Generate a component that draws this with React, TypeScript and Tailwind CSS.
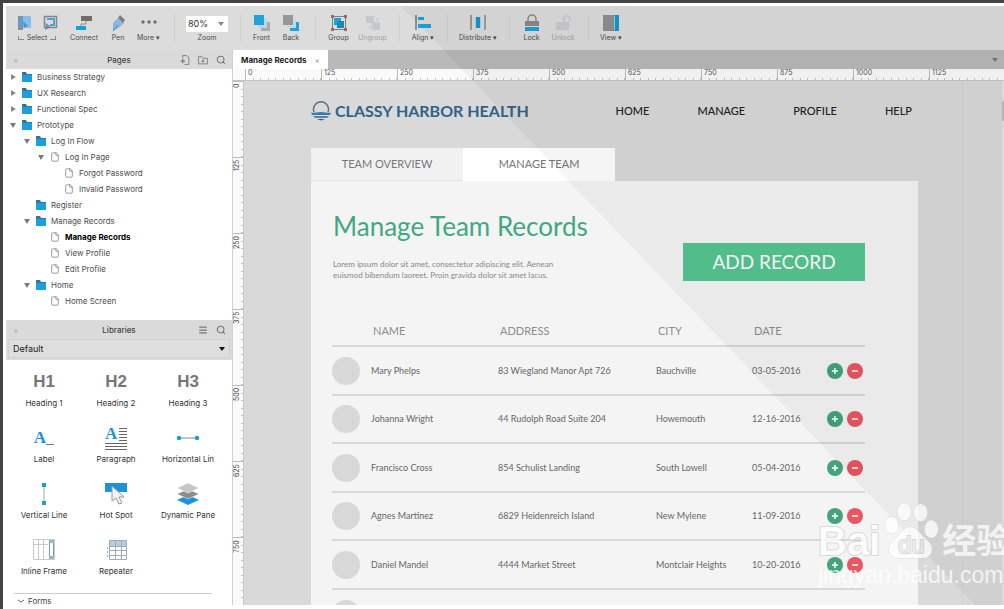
import React, { useState } from "react";
import { File, Menu, Search } from "lucide-react";

interface TreeItem {
	name: string;
	depth: number;
	type: "folder" | "page";
	arrow?: "open" | "closed";
}

interface TeamRecord {
	name: string;
	address: string;
	city: string;
	date: string;
}

const treeItems: TreeItem[] = [
	{ name: "Business Strategy", depth: 0, type: "folder", arrow: "closed" },
	{ name: "UX Research", depth: 0, type: "folder", arrow: "closed" },
	{ name: "Functional Spec", depth: 0, type: "folder", arrow: "closed" },
	{ name: "Prototype", depth: 0, type: "folder", arrow: "open" },
	{ name: "Log In Flow", depth: 1, type: "folder", arrow: "open" },
	{ name: "Log In Page", depth: 2, type: "page", arrow: "open" },
	{ name: "Forgot Password", depth: 3, type: "page" },
	{ name: "Invalid Password", depth: 3, type: "page" },
	{ name: "Register", depth: 1, type: "folder" },
	{ name: "Manage Records", depth: 1, type: "folder", arrow: "open" },
	{ name: "Manage Records", depth: 2, type: "page" },
	{ name: "View Profile", depth: 2, type: "page" },
	{ name: "Edit Profile", depth: 2, type: "page" },
	{ name: "Home", depth: 1, type: "folder", arrow: "open" },
	{ name: "Home Screen", depth: 2, type: "page" },
];

const records: TeamRecord[] = [
	{ name: "Mary Phelps", address: "83 Wiegland Manor Apt 726", city: "Bauchville", date: "03-05-2016" },
	{ name: "Johanna Wright", address: "44 Rudolph Road Suite 204", city: "Howemouth", date: "12-16-2016" },
	{ name: "Francisco Cross", address: "854 Schulist Landing", city: "South Lowell", date: "05-04-2016" },
	{ name: "Agnes Martinez", address: "6829 Heidenreich Island", city: "New Mylene", date: "11-09-2016" },
	{ name: "Daniel Mandel", address: "4444 Market Street", city: "Montclair Heights", date: "10-20-2016" },
];

const indents = ["pl-1", "pl-[18px]", "pl-8", "pl-[46px]"];

const Icon: React.FC<{ children: React.ReactNode; className?: string }> = ({
	children,
	className = "size-[18px]",
}) => (
	<svg viewBox="0 0 18 18" className={className} fill="none" aria-hidden="true">
		{children}
	</svg>
);

const Tool: React.FC<{
	label: string;
	width: string;
	disabled?: boolean;
	children: React.ReactNode;
}> = ({ label, width, disabled, children }) => (
	<button
		disabled={disabled}
		className={`${width} flex shrink-0 flex-col items-center gap-0.5 whitespace-nowrap text-[7px] leading-2 ${
			disabled ? "text-[#a2a2a2]" : "text-[#4a4a4a]"
		}`}>
		<Icon>{children}</Icon>
		{label}
	</button>
);

const Divider: React.FC = () => (
	<div className="flex w-4 shrink-0 justify-center self-stretch pb-2">
		<div className="w-px bg-[#d0d0d0]" />
	</div>
);

const Toolbar: React.FC = () => {
	const [zoom, setZoom] = useState<string>("80%");

	return (
		<div className="flex h-11 shrink-0 items-start bg-[#dcdcdc] pl-[5px] pt-2">
			<div className="flex w-[52px] shrink-0 flex-col items-center gap-0.5 text-[7px] leading-2 text-[#4a4a4a]">
				<div className="flex gap-2">
					<button aria-label="Select intersected">
						<Icon>
							<path d="M3 2h5v14H3z" fill="#8d8d8d" />
							<path d="M4 3h4v10H4z" fill="#4fa3d2" />
							<path d="M8 2h8v12H8z" fill="#86bfea" />
							<path d="M8 7l5 5-2 .4L9 14z" fill="#5d8fb5" />
						</Icon>
					</button>
					<button aria-label="Select contained">
						<Icon>
							<path d="M3.500 2.500h12v11h-12z" stroke="#7e8990" strokeWidth="1.500" />
							<path d="M6 5h7v6H9" stroke="#4fa3d2" strokeWidth="2" />
							<path d="M4 16l1-7 5 4z" fill="#6f8ea5" />
						</Icon>
					</button>
				</div>
				<div className="flex items-center gap-[3px]">
					<span className="h-1 w-1.5 border-b border-l border-[#888]" />
					Select
					<span className="h-1 w-1.5 border-b border-r border-[#888]" />
				</div>
			</div>
			<Tool label="Connect" width="w-[42px]">
				<path d="M6 2h11v5H6z" fill="#766c66" />
				<path d="M11 7v3H6v3" stroke="#8d8d8d" />
				<path d="M1 12h10v4H1z" fill="#15a0d8" />
			</Tool>
			<Tool label="Pen" width="w-[26px]">
				<path d="M4 17V9l5-5 6 5-4 4z" fill="#8db7e0" />
				<path d="M9 4l2-3 5 5-2 3z" fill="#7d7d7d" />
				<path d="M4 17l5-6" stroke="#5f7f9d" />
			</Tool>
			<Tool label="More ▾" width="w-[35px]">
				<circle cx="3" cy="8" r="1.700" fill="#6e6e6e" />
				<circle cx="9" cy="8" r="1.700" fill="#6e6e6e" />
				<circle cx="15" cy="8" r="1.700" fill="#6e6e6e" />
			</Tool>
			<Divider />
			<label className="flex w-[50px] shrink-0 flex-col items-center gap-0.5 pt-0.5 text-[7px] leading-2 text-[#4a4a4a]">
				<span className="flex h-4 w-[42px] items-center bg-white pr-1">
					<select
						value={zoom}
						onChange={(e) => setZoom(e.target.value)}
						className="min-w-0 flex-1 appearance-none pl-0.5 text-[9px] text-[#333]">
						<option>80%</option>
						<option>100%</option>
					</select>
					<svg viewBox="0 0 6 4" className="h-1 w-1.5" aria-hidden="true">
						<path d="M0 0h6L3 4z" fill="#888" />
					</svg>
				</span>
				Zoom
			</label>
			<Divider />
			<Tool label="Front" width="w-[27px]">
				<path d="M8 8h9v9H8z" fill="#a9a9a9" />
				<path d="M5 5h9v9H5z" fill="#b9d4e4" />
				<path d="M1 1h10v10H1z" fill="#1ba3dc" />
			</Tool>
			<Tool label="Back" width="w-[32px]">
				<path d="M8 8h9v9H8z" fill="#1ba3dc" />
				<path d="M5 5h9v9H5z" fill="#c0d9e6" />
				<path d="M1 1h10v10H1z" fill="#9b9694" />
			</Tool>
			<Divider />
			<Tool label="Group" width="w-[31px]">
				<path d="M2.500 2.500h13v13h-13z" stroke="#8b7b76" />
				<path d="M4 4h7v7H4z" fill="#1ba3dc" />
				<path d="M7 7h7v7H7z" fill="#158bb8" />
				<path d="M1 1h3v3H1zM14 1h3v3h-3zM1 14h3v3H1zM14 14h3v3h-3z" fill="#8b6f68" />
			</Tool>
			<Tool label="Ungroup" width="w-[37px]" disabled>
				<path d="M2 2h8v7H2zM8 8h8v8H8z" fill="#c6c8cb" />
				<path d="M5 12h4v3H5zM12 4h3v3h-3z" fill="#d0d0d3" />
			</Tool>
			<Divider />
			<Tool label="Align ▾" width="w-[32px]">
				<path d="M1 1h2v15H1z" fill="#8f8f8f" />
				<path d="M4 3h6v3H4zM4 10h13v4H4z" fill="#1ba3dc" />
			</Tool>
			<Divider />
			<Tool label="Distribute ▾" width="w-[46px]">
				<path d="M1 1h2v15H1zM15 1h2v15h-2z" fill="#a39a98" />
				<path d="M6 3h6v11H6z" fill="#a9cfdf" />
				<path d="M7 3h4v11H7z" fill="#1498cf" />
			</Tool>
			<Divider />
			<Tool label="Lock" width="w-[29px]">
				<path d="M5 8V5a4 4 0 018 0v3" stroke="#8f8885" strokeWidth="1.500" />
				<path d="M2 7h14v5H2z" fill="#8f8885" />
				<path d="M2 13h14v4H2z" fill="#1ba3dc" />
			</Tool>
			<Tool label="Unlock" width="w-[34px]" disabled>
				<path d="M10 8V5a3 3 0 016 0v2" stroke="#c9c9cc" strokeWidth="1.500" />
				<path d="M2 8h13v8H2z" fill="#c9cacd" />
			</Tool>
			<Divider />
			<Tool label="View ▾" width="w-[30px]">
				<path d="M1 1h11v16H1z" fill="#8f8f8f" />
				<path d="M12 1h5v16h-5z" fill="#1597cf" />
				<path d="M12 2h1v14h-1z" fill="#8ccbe6" />
			</Tool>
		</div>
	);
};

const PanelHeader: React.FC<{ title: string; children: React.ReactNode }> = ({
	title,
	children,
}) => (
	<div className="flex h-[19px] shrink-0 items-center bg-[#dadada] px-1.5 text-[#777]">
		<div className="flex flex-1">
			<button aria-label={`Close ${title}`} className="size-2 text-[8px] leading-2 text-[#aaa]">
				×
			</button>
		</div>
		<h2 className="text-[8px] font-medium text-[#444]">{title}</h2>
		<div className="flex flex-1 justify-end gap-2">{children}</div>
	</div>
);

const FolderIcon: React.FC = () => (
	<svg viewBox="0 0 12 10" className="h-2.5 w-3 shrink-0" aria-hidden="true">
		<path d="M1 0h4l1 2h5v7H1z" fill="#3c7392" />
		<path d="M1 3h10v7H1z" fill="#1c9fe0" />
	</svg>
);

const PagesPanel: React.FC = () => (
	<section className="flex h-[270px] shrink-0 flex-col bg-white">
		<PanelHeader title="Pages">
			<button aria-label="Add page">
				<Icon className="size-2.5">
					<path d="M5 6V1h7l4 4v12H8" stroke="currentColor" strokeWidth="1.500" />
					<path d="M1 11h8M5 7v8" stroke="currentColor" strokeWidth="2" />
				</Icon>
			</button>
			<button aria-label="Add folder">
				<Icon className="size-2.5">
					<path d="M1 3h6l2 3h8v10H1z" stroke="currentColor" strokeWidth="1.500" />
					<path d="M6 11h6M9 8v6" stroke="currentColor" strokeWidth="1.500" />
				</Icon>
			</button>
			<button aria-label="Search pages">
				<Search className="size-2.5" strokeWidth={2.5} />
			</button>
		</PanelHeader>
		<ul className="text-[8px] leading-4 text-[#4d4d4d]">
			{treeItems.map((item: TreeItem, index: number) => (
				<li key={index} className={`flex h-4 items-center ${indents[item.depth]}`}>
					<svg viewBox="0 0 6 6" className="mr-[5px] size-1.5 shrink-0" aria-hidden="true">
						{item.arrow === "closed" && <path d="M1 0l5 3-5 3z" fill="#8a8a8a" />}
						{item.arrow === "open" && <path d="M0 1h6L3 6z" fill="#7a7a7a" />}
					</svg>
					{item.type === "folder" ? (
						<FolderIcon />
					) : (
						<File className="mx-px size-2.5 shrink-0 text-[#888]" />
					)}
					<button className={`ml-1 ${index === 10 ? "font-bold text-black" : ""}`}>
						{item.name}
					</button>
				</li>
			))}
		</ul>
	</section>
);

const widgetIcons: { label: string; icon: React.ReactNode }[] = [
	{ label: "Heading 1", icon: <b>H1</b> },
	{ label: "Heading 2", icon: <b>H2</b> },
	{ label: "Heading 3", icon: <b>H3</b> },
	{
		label: "Label",
		icon: (
			<>
				<span className="font-['Liberation_Serif',serif] font-bold text-[#1a94d0]">A</span>
				<span className="mb-1.5 h-px w-2 self-end bg-[#777]" />
			</>
		),
	},
	{
		label: "Paragraph",
		icon: (
			<div className="flex w-[22px] flex-col gap-0.5">
				<div className="flex items-end justify-between">
					<span className="font-['Liberation_Serif',serif] leading-[14px] font-bold text-[#1a94d0]">
						A
					</span>
					<span className="flex flex-col gap-0.5">
						<span className="h-px w-2 bg-[#666]" />
						<span className="h-px w-2 bg-[#666]" />
						<span className="h-px w-2 bg-[#666]" />
						<span className="h-px w-2 bg-[#666]" />
						<span className="h-px w-2 bg-[#666]" />
					</span>
				</div>
				<span className="h-px bg-[#666]" />
				<span className="h-px bg-[#666]" />
				<span className="h-px bg-[#666]" />
			</div>
		),
	},
	{
		label: "Horizontal Lin",
		icon: (
			<svg viewBox="0 0 24 24" className="size-6" aria-hidden="true">
				<path d="M3 12h18" stroke="#8a8a8a" />
				<circle cx="3" cy="12" r="2.200" fill="#1b9fc9" />
				<circle cx="21" cy="12" r="2.200" fill="#1b9fc9" />
			</svg>
		),
	},
	{
		label: "Vertical Line",
		icon: (
			<svg viewBox="0 0 24 24" className="size-6" aria-hidden="true">
				<path d="M12 3v18" stroke="#aaa" />
				<path d="M10 1h4v4h-4zM10 19h4v4h-4z" fill="#1b9fc9" />
			</svg>
		),
	},
	{
		label: "Hot Spot",
		icon: (
			<svg viewBox="0 0 24 24" className="size-6" aria-hidden="true">
				<path d="M1 1h22v9H1z" fill="#1a94d8" />
				<path d="M8 4v15l4-3 3 6 3-1-3-6h5z" fill="#f2f2f2" stroke="#999" />
			</svg>
		),
	},
	{
		label: "Dynamic Pane",
		icon: (
			<svg viewBox="0 0 24 24" className="size-6" aria-hidden="true">
				<path d="M1 18l11-5 11 5-11 5z" fill="#1a94d8" />
				<path d="M1 12l11-5 11 5-11 5z" fill="#8c8c8c" stroke="#fff" strokeWidth=".5" />
				<path d="M1 6l11-5 11 5-11 5z" fill="#c6c6c6" stroke="#fff" strokeWidth=".5" />
			</svg>
		),
	},
	{
		label: "Inline Frame",
		icon: (
			<svg viewBox="0 0 24 24" className="size-6" fill="none" aria-hidden="true">
				<path d="M1.500 1.500h21v20h-21zM6.500 1v21M11.500 1v21M2 6.500h14" stroke="#c9c9c9" />
				<path d="M17.500 2.500h4v18h-4z" stroke="#6aa3c4" />
				<path d="M17 2h5v3h-5zM17 18h5v3h-5z" fill="#9db4c4" />
			</svg>
		),
	},
	{
		label: "Repeater",
		icon: (
			<svg viewBox="0 0 24 24" className="size-6" fill="none" aria-hidden="true">
				<path d="M5 2h18v6H5z" fill="#b3cfe4" />
				<path d="M5.500 2.500h17v19h-17zM11.500 3v18M17.500 3v18M5 8.500h18M5 12.500h18M5 17.500h18" stroke="#a3abb2" />
				<path d="M3.500 9v12" stroke="#8ab5d2" strokeDasharray="2 2" />
			</svg>
		),
	},
];

const LibrariesPanel: React.FC = () => (
	<section className="flex min-h-0 flex-1 flex-col bg-white">
		<PanelHeader title="Libraries">
			<button aria-label="Library options">
				<Menu className="size-2.5" strokeWidth={3} />
			</button>
			<button aria-label="Search libraries">
				<Search className="size-2.5" strokeWidth={2.5} />
			</button>
		</PanelHeader>
		<div className="shrink-0 bg-[#dadada] px-0.5 pb-0.5">
			<div className="flex h-[19px] items-center border border-[#d0d0d0] bg-[#dedede] px-1">
				<select aria-label="Library" className="min-w-0 flex-1 appearance-none text-[9px] text-[#222]">
					<option>Default</option>
				</select>
				<svg viewBox="0 0 6 4" className="h-1 w-1.5" aria-hidden="true">
					<path d="M0 0h6L3 4z" fill="#111" />
				</svg>
			</div>
		</div>
		<div className="mx-0.5 grid w-[216px] shrink-0 grid-cols-3 pt-[9px] text-[#333]">
			{widgetIcons.map((widget) => (
				<button
					key={widget.label}
					className="flex h-14 flex-col items-center gap-0.5 whitespace-nowrap text-[8px] leading-3">
					<span className="flex h-[26px] items-center font-['Liberation_Sans',sans-serif] text-[17px] leading-5 text-[#777]">
						{widget.icon}
					</span>
					{widget.label}
				</button>
			))}
		</div>
		<div className="ml-2 mr-5 flex shrink-0 border-t border-[#ccc] pl-1 pt-[3px] text-[8px] leading-2 text-[#444]">
			<button className="flex items-center gap-1">
				<svg viewBox="0 0 6 4" className="h-1 w-1.5" fill="none" aria-hidden="true">
					<path d="M0 1l3 2 3-2" stroke="#666" />
				</svg>
				Forms
			</button>
		</div>
	</section>
);

const marks: number[] = [0, 125, 250, 375, 500, 625, 750, 875, 1000, 1125];
const ticks: number[] = [1, 2, 3, 4, 5, 6, 7, 8, 9, 10];

const HorizontalRuler: React.FC = () => (
	<div className="flex h-3 shrink-0 overflow-hidden border-b border-[#c4c4c4] bg-[#fafafa] pl-3 text-[7px] leading-2 text-[#555]">
		{marks.map((mark) => (
			<div key={mark} className="flex w-[76px] shrink-0 flex-col border-l border-[#bbb]">
				<span className="h-2 pl-0.5">{mark}</span>
				<div className="flex h-[3px] items-end">
					{ticks.map((tick) => (
						<span key={tick} className="h-0.5 flex-1 border-r border-[#c4c4c4]" />
					))}
				</div>
			</div>
		))}
	</div>
);

const VerticalRuler: React.FC = () => (
	<div className="flex w-[11px] shrink-0 flex-col overflow-hidden border-r border-[#c8c8c8] bg-[#fafafa] text-[7px] leading-[7px] text-[#444]">
		{marks.slice(0, 7).map((mark) => (
			<div key={mark} className="flex h-[76px] shrink-0 border-t border-[#bbb]">
				<span className="w-[7px] rotate-180 pb-0.5 text-right [writing-mode:vertical-rl]">{mark}</span>
				<div className="flex w-[3px] flex-col items-end">
					{ticks.map((tick) => (
						<span key={tick} className="w-0.5 flex-1 border-b border-[#c4c4c4]" />
					))}
				</div>
			</div>
		))}
	</div>
);

const RecordsTable: React.FC = () => (
	<table className="w-full table-fixed text-left text-[9px] text-[#666]">
		<colgroup>
			<col className="w-[39px]" />
			<col className="w-[127px]" />
			<col />
			<col className="w-24" />
			<col className="w-[75px]" />
			<col className="w-[38px]" />
		</colgroup>
		<thead>
			<tr className="h-[30px] border-b-2 border-[#d8d8d8] text-[11px] text-[#8c8c8c]">
				<th />
				<th className="pl-0.5 pt-0.5 font-normal">NAME</th>
				<th className="pl-0.5 pt-0.5 font-normal">ADDRESS</th>
				<th className="pl-0.5 pt-0.5 font-normal">CITY</th>
				<th className="pl-0.5 pt-0.5 font-normal">DATE</th>
				<th />
			</tr>
		</thead>
		<tbody>
			{records.map((record: TeamRecord) => (
				<tr key={record.name} className="border-b-2 border-[#d8d8d8] odd:h-[49px] even:h-12">
					<td>
						<div className="size-7 rounded-full bg-[#d8d8d8]" />
					</td>
					<td>{record.name}</td>
					<td>{record.address}</td>
					<td>{record.city}</td>
					<td>{record.date}</td>
					<td>
						<div className="flex gap-1">
							<button
								aria-label={`Add ${record.name}`}
								className="flex size-4 items-center justify-center rounded-full bg-[#43a37a]">
								<svg viewBox="0 0 8 8" className="size-2" aria-hidden="true">
									<path d="M4 1v6M1 4h6" stroke="#fff" strokeWidth="1.500" />
								</svg>
							</button>
							<button
								aria-label={`Remove ${record.name}`}
								className="flex size-4 items-center justify-center rounded-full bg-[#ea5562]">
								<svg viewBox="0 0 8 8" className="size-2" aria-hidden="true">
									<path d="M1 4h6" stroke="#fff" strokeWidth="1.500" />
								</svg>
							</button>
						</div>
					</td>
				</tr>
			))}
			<tr className="h-12">
				<td>
					<div className="size-7 rounded-full bg-[#d8d8d8]" />
				</td>
			</tr>
		</tbody>
	</table>
);

const Canvas: React.FC = () => (
	<div className="min-w-0 flex-1 overflow-hidden bg-[#d9d9d9] pl-[67px] font-['Lato',sans-serif]">
		<div className="mr-[39px] border-r border-[#d2d2d2] pr-11">
			<header className="flex h-[67px] items-center justify-between pb-[7px] pr-1.5">
				<a href="#" className="flex items-center gap-1 text-[16px] font-bold text-[#2f6389]">
					<svg viewBox="0 0 20 20" className="size-5" fill="none" aria-hidden="true">
						<path d="M3 11a7.500 7.500 0 1114 0" stroke="#5f7388" strokeWidth="1.500" />
						<path d="M0 11.500c3 1 5-.5 10-.5s7 1.500 10 .5l-1 2.500H1z" fill="#3f79a5" />
						<path d="M2 15h16l-2 2H4z" fill="#5584a9" />
						<path d="M6 18h8l-4 1.500z" fill="#2f5578" />
					</svg>
					CLASSY HARBOR HEALTH
				</a>
				<nav className="flex gap-12 text-[11px] font-medium text-[#222]">
					<a href="#">HOME</a>
					<a href="#">MANAGE</a>
					<a href="#">PROFILE</a>
					<a href="#">HELP</a>
				</nav>
			</header>
			<div className="flex text-[11px] text-[#777]">
				<button className="h-[33px] w-[152px] border-b border-[#e2e2e2] bg-[#f1f1f2]">TEAM OVERVIEW</button>
				<button className="h-[33px] w-[152px] bg-white">MANAGE TEAM</button>
			</div>
			<main className="bg-[#f4f4f4] pl-[22px] pr-[53px] pt-[27px]">
				<div className="flex items-end justify-between">
					<div>
						<h1 className="text-[26px] leading-9 text-[#3fa981]">Manage Team Records</h1>
						<p className="mt-[15px] text-[8px] leading-[11px] text-[#888]">
							Lorem ipsum dolor sit amet, consectetur adipiscing elit. Aenean
							<br />
							euismod bibendum laoreet. Proin gravida dolor sit amet lacus.
						</p>
					</div>
					<button className="h-[38px] w-[182px] bg-[#54c591] text-[19px] text-white">
						ADD RECORD
					</button>
				</div>
				<div className="-ml-px pt-[35px]">
					<RecordsTable />
				</div>
			</main>
		</div>
	</div>
);

const Watermark: React.FC = () => (
	<div
		className="pointer-events-none absolute bottom-5 right-[-24px] flex w-[210px] flex-col whitespace-nowrap font-['Liberation_Sans','Noto_Sans_CJK_SC',sans-serif] text-white opacity-75">
		<div className="flex items-end gap-1 leading-10 [paint-order:stroke_fill] [-webkit-text-stroke:2px_#d2d2d2]">
			<span className="text-[40px] font-bold">Bai</span>
			<div className="relative h-[62px] w-[54px]">
				<svg viewBox="0 0 56 62" className="h-full w-full" aria-hidden="true">
					<g fill="#fff" stroke="#d0d0d0">
						<ellipse cx="8" cy="26" rx="7" ry="9" />
						<ellipse cx="21" cy="12" rx="7" ry="9" />
						<ellipse cx="38" cy="13" rx="7" ry="9" />
						<ellipse cx="49" cy="30" rx="7" ry="9" />
						<path d="M27 28c8 0 11 9 18 14 8 7 5 18-4 18H14C4 60 2 49 10 42c7-5 9-14 17-14z" />
					</g>
				</svg>
				<span className="absolute inset-x-0 bottom-0 text-center text-[24px] leading-8 text-[#ececec]">du</span>
			</div>
			<span className="text-[34px] font-bold">经验</span>
		</div>
		<div className="text-[23px] leading-7">jingyan.baidu.com</div>
	</div>
);

const App: React.FC = () => {
	return (
		<div className="flex h-screen flex-col bg-[#444] pl-[3px] pt-[3px] font-['Inter',sans-serif]">
			<div className="relative flex min-h-0 flex-1 flex-col overflow-hidden bg-white pb-1 pl-[3px] pt-[3px]">
				<Toolbar />
				<div className="flex min-h-0 flex-1 overflow-hidden">
					<aside className="flex w-[226px] shrink-0 flex-col overflow-hidden">
						<PagesPanel />
						<LibrariesPanel />
					</aside>
					<div className="flex min-w-0 flex-1 flex-col border-l border-[#cfcfcf]">
						<div className="flex h-[19px] shrink-0 items-center justify-between bg-[#b9b9b9] pr-1.5">
							<div className="flex h-full items-center gap-2 bg-white px-2 text-[8px] font-bold text-[#222]">
								Manage Records
								<button aria-label="Close tab" className="text-[8px] font-normal text-[#999]">
									×
								</button>
							</div>
							<svg viewBox="0 0 6 4" className="h-1 w-1.5" aria-hidden="true">
								<path d="M0 0h6L3 4z" fill="#777" />
							</svg>
						</div>
						<HorizontalRuler />
						<div className="flex min-h-0 flex-1">
							<VerticalRuler />
							<Canvas />
							<div className="w-0.5 shrink-0 bg-[#e4e4e4] pt-5">
								<div className="h-5 bg-[#bdbdbd]" />
							</div>
						</div>
					</div>
				</div>
				{/* diagonal shade over the right side of the window */}
				<div className="pointer-events-none absolute inset-x-0 bottom-1 top-[3px] bg-black/4 [clip-path:polygon(398px_0,100%_0,100%_100%,972px_100%)]" />
				<Watermark />
			</div>
		</div>
	);
};

export default App;
